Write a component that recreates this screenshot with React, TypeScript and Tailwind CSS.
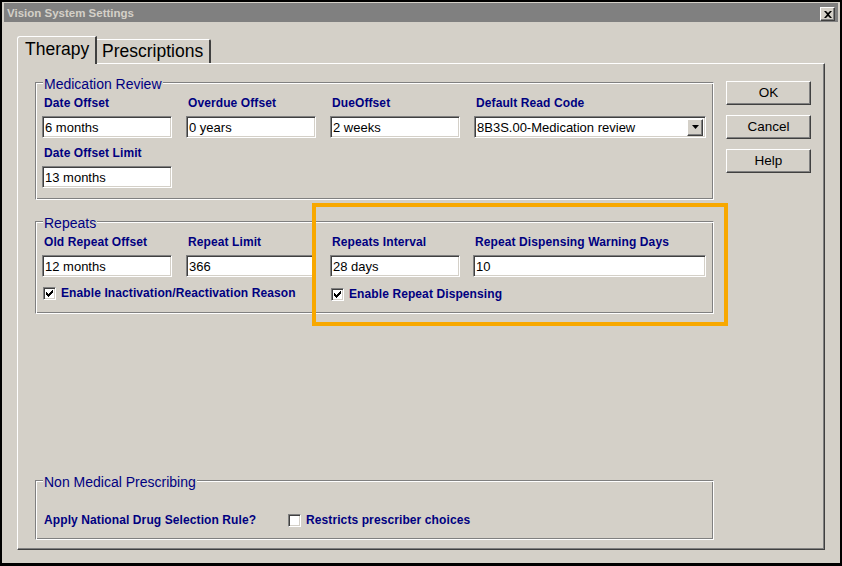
import type { ReactNode } from "react";

const SUNKEN =
  "border border-t-[#808080] border-l-[#808080] border-r-white border-b-white shadow-[inset_1px_1px_0_#404040,inset_-1px_-1px_0_#d4d0c8]";
const RAISED =
  "border border-t-white border-l-white border-r-[#404040] border-b-[#404040] shadow-[inset_-1px_-1px_0_#808080]";
const ETCHED =
  "border border-t-[#808080] border-l-[#808080] border-r-white border-b-white shadow-[inset_1px_1px_0_#ffffff,inset_-1px_-1px_0_#808080]";

const TextBox = ({ value, wide = false }: { value: string; wide?: boolean }) => (
  <div
    className={`flex h-[22px] items-center bg-white pl-[2px] text-[13px] leading-none text-black ${SUNKEN} ${
      wide ? "w-[233px]" : "w-[130px]"
    }`}
  >
    {value}
  </div>
);

const ComboBox = ({ value }: { value: string }) => (
  <div className={`flex h-[22px] w-[232px] items-center bg-white pl-[2px] pr-[2px] text-[13px] leading-none text-black ${SUNKEN}`}>
    <span className="flex-1">{value}</span>
    <span className={`flex h-[17px] w-[16px] items-center justify-center bg-[#d4d0c8] ${RAISED}`}>
      <svg width="7" height="4" viewBox="0 0 7 4">
        <path d="M0 0h7L3.5 4z" fill="#000" />
      </svg>
    </span>
  </div>
);

const Field = ({ label, children }: { label: string; children: ReactNode }) => (
  <div className="flex flex-col">
    <div className="h-[14px] whitespace-nowrap pl-[2px] text-[12px] font-bold leading-[14px] tracking-[0.1px] text-[#000080]">
      {label}
    </div>
    <div className="mt-[6px]">{children}</div>
  </div>
);

const CheckBox = ({ checked }: { checked: boolean }) => (
  <span className={`flex h-[13px] w-[13px] shrink-0 items-center justify-center bg-white ${SUNKEN}`}>
    {checked ? (
      <svg width="7" height="7" viewBox="0 0 7 7" shapeRendering="crispEdges">
        <path d="M6 0H7V3H6V4H5V5H4V6H3V7H2V6H1V5H0V2H1V3H2V4H3V3H4V2H5V1H6Z" fill="#000" />
      </svg>
    ) : null}
  </span>
);

const Check = ({ label, checked }: { label: string; checked: boolean }) => (
  <div className="flex items-center gap-[5px]">
    <CheckBox checked={checked} />
    <span className="whitespace-nowrap text-[12px] font-bold leading-[14px] tracking-[0.1px] text-[#000080]">
      {label}
    </span>
  </div>
);

const Group = ({
  title,
  className,
  children,
}: {
  title: string;
  className: string;
  children: ReactNode;
}) => (
  <div className={`flex flex-col ${ETCHED} ${className}`}>
    <div className="-mt-[7px] ml-[7px] w-fit bg-[#d4d0c8] px-[1px] text-[14px] leading-[16px] text-[#000080]">
      {title}
    </div>
    {children}
  </div>
);

const Button = ({ label }: { label: string }) => (
  <button
    className={`flex h-[24px] w-[85px] items-center justify-center bg-[#d4d0c8] text-[13.5px] leading-none text-black ${RAISED}`}
    type="button"
  >
    {label}
  </button>
);

const TitleBar = () => (
  <div className="flex h-[19px] items-center justify-between bg-[#808080] pl-[3px] pr-[3px]">
    <span className="mt-[3px] text-[11.5px] font-bold leading-none text-[#d4d0c8]">
      Vision System Settings
    </span>
    <span className={`mt-[3px] flex h-[14px] w-[15px] items-center justify-center bg-[#d4d0c8] ${RAISED}`}>
      <svg width="8" height="7" viewBox="0 0 8 7">
        <path d="M0 0h2l2 2 2-2h2L5 3.5 8 7H6L4 5 2 7H0l3-3.5z" fill="#000" />
      </svg>
    </span>
  </div>
);

export default function App() {
  return (
    <div className="relative h-[566px] w-[842px] bg-black pb-[3px] pl-[2px] pr-[2px] pt-[2px] font-['Liberation_Sans',Arial,sans-serif]">
      <div className="flex h-full flex-col bg-[#d4d0c8] px-[2px] pt-[1px]">
        <TitleBar />

        <div className="ml-[13px] mt-[14px] flex h-[27px] items-end">
          <div className="relative z-10 -mb-px h-[28px] w-[80px] rounded-tl-[3px] border-l border-t border-r-2 border-l-white border-t-white border-r-[#404040] bg-[#d4d0c8] pl-[7px] pt-[2px] text-[17.5px] leading-[20px] text-black">
            Therapy
          </div>
          <div className="h-[24px] w-[114px] rounded-tr-[2px] border-t border-r-2 border-t-white border-r-[#404040] bg-[#d4d0c8] pl-[5px] pt-[1px] text-[17.5px] leading-[20px] text-black">
            Prescriptions
          </div>
        </div>

        <div className="ml-[13px] flex h-[487px] w-[808px] gap-[12px] border border-t-white border-l-white border-r-[#404040] border-b-[#404040] pl-[17px] pt-[18px] shadow-[inset_-1px_-1px_0_#808080]">
          <div className="flex w-[679px] flex-col">
            <Group title="Medication Review" className="pb-[11px]">
              <div className="mt-[4px] flex pl-[6px]">
                <div className="w-[144px]">
                  <Field label="Date Offset">
                    <TextBox value="6 months" />
                  </Field>
                </div>
                <div className="w-[144px]">
                  <Field label="Overdue Offset">
                    <TextBox value="0 years" />
                  </Field>
                </div>
                <div className="w-[144px]">
                  <Field label="DueOffset">
                    <TextBox value="2 weeks" />
                  </Field>
                </div>
                <div className="w-[232px]">
                  <Field label="Default Read Code">
                    <ComboBox value="8B3S.00-Medication review" />
                  </Field>
                </div>
              </div>
              <div className="mt-[8px] flex pl-[6px]">
                <Field label="Date Offset Limit">
                  <TextBox value="13 months" />
                </Field>
              </div>
            </Group>

            <Group title="Repeats" className="mt-[21px] pb-[12px]">
              <div className="mt-[4px] grid grid-cols-[144px_144px_144px_233px] pl-[6px]">
                <Field label="Old Repeat Offset">
                  <TextBox value="12 months" />
                </Field>
                <Field label="Repeat Limit">
                  <TextBox value="366" />
                </Field>
                <Field label="Repeats Interval">
                  <TextBox value="28 days" />
                </Field>
                <div className="-ml-px">
                  <Field label="Repeat Dispensing Warning Days">
                    <TextBox value="10" wide />
                  </Field>
                </div>
                <div className="col-span-2 mt-[9px] pl-px">
                  <Check label="Enable Inactivation/Reactivation Reason" checked />
                </div>
                <div className="col-span-2 mt-[10px] pl-px">
                  <Check label="Enable Repeat Dispensing" checked />
                </div>
              </div>
            </Group>

            <Group title="Non Medical Prescribing" className="mt-[166px] pb-[12px]">
              <div className="mt-[22px] flex items-center pl-[8px]">
                <span className="w-[244px] whitespace-nowrap text-[12px] font-bold leading-[14px] tracking-[0.1px] text-[#000080]">
                  Apply National Drug Selection Rule?
                </span>
                <div className="mt-[1px]">
                  <Check label="Restricts prescriber choices" checked={false} />
                </div>
              </div>
            </Group>
          </div>

          <div className="-mt-px flex w-[85px] flex-col gap-[10px]">
            <Button label="OK" />
            <Button label="Cancel" />
            <Button label="Help" />
          </div>
        </div>
      </div>

      <div className="pointer-events-none absolute left-[312px] top-[203px] h-[123px] w-[416px] border-4 border-[#f8a800]" />
    </div>
  );
}
